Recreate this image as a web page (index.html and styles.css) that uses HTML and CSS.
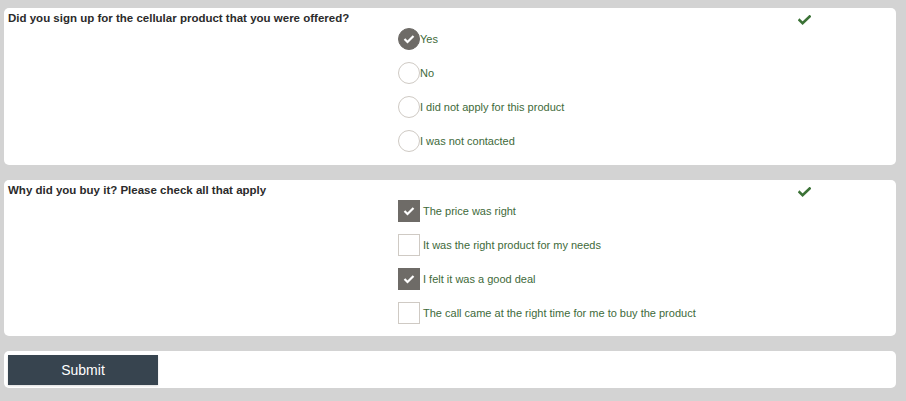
FILE: index.html
```html
<!DOCTYPE html>
<html>
<head>
<meta charset="utf-8">
<link rel="stylesheet" href="styles.css">
</head>
<body>
<div class="page">
  <section class="card">
    <div class="title">Did you sign up for the cellular product that you were offered?</div>
    <div class="done"><svg width="13" height="10" viewBox="0 0 13 10"><path d="M1.5 5.2 L4.6 8.2 L11.6 1.5" fill="none" stroke="#3b7236" stroke-width="2.6" stroke-linecap="square"/></svg></div>
    <ul class="options">
      <li class="opt"><span class="radio checked"><svg width="12" height="10" viewBox="0 0 12 10"><path d="M1.5 5 L4.5 8 L10.5 2" fill="none" stroke="#fff" stroke-width="2.2"/></svg></span><span class="label">Yes</span></li>
      <li class="opt"><span class="radio"></span><span class="label">No</span></li>
      <li class="opt"><span class="radio"></span><span class="label">I did not apply for this product</span></li>
      <li class="opt"><span class="radio"></span><span class="label">I was not contacted</span></li>
    </ul>
  </section>
  <section class="card second">
    <div class="title">Why did you buy it? Please check all that apply</div>
    <div class="done"><svg width="13" height="10" viewBox="0 0 13 10"><path d="M1.5 5.2 L4.6 8.2 L11.6 1.5" fill="none" stroke="#3b7236" stroke-width="2.6" stroke-linecap="square"/></svg></div>
    <ul class="options">
      <li class="opt"><span class="box checked"><svg width="12" height="10" viewBox="0 0 12 10"><path d="M1.5 5 L4.5 8 L10.5 2" fill="none" stroke="#fff" stroke-width="2.2"/></svg></span><span class="label wide">The price was right</span></li>
      <li class="opt"><span class="box"></span><span class="label wide">It was the right product for my needs</span></li>
      <li class="opt"><span class="box checked"><svg width="12" height="10" viewBox="0 0 12 10"><path d="M1.5 5 L4.5 8 L10.5 2" fill="none" stroke="#fff" stroke-width="2.2"/></svg></span><span class="label wide">I felt it was a good deal</span></li>
      <li class="opt"><span class="box"></span><span class="label wide">The call came at the right time for me to buy the product</span></li>
    </ul>
  </section>
  <section class="card actions">
    <button class="submit" type="button">Submit</button>
  </section>
</div>
</body>
</html>
```
FILE: styles.css
```css
html, body {
  margin: 0;
  padding: 0;
  background: #d3d3d3;
}
body {
  font-family: "Liberation Sans", Arial, sans-serif;
}
.page {
  padding: 8px 10px 0 4px;
  display: flex;
  flex-direction: column;
  gap: 15px;
}
.card {
  background: #fff;
  border-radius: 5px;
  padding: 4px 4px 13px 4px;
  display: grid;
  grid-template-columns: 390px 400px 1fr;
  row-gap: 3px;
}
.card.second {
  padding-bottom: 12px;
}
.title {
  grid-column: 1 / 3;
  grid-row: 1;
  font-size: 11.5px;
  font-weight: bold;
  line-height: 13px;
  color: #2b2b2b;
}
.done {
  grid-column: 3;
  grid-row: 1;
  padding-top: 3px;
  line-height: 0;
}
.options {
  grid-column: 2;
  grid-row: 2;
  list-style: none;
  margin: 0;
  padding: 0;
  display: flex;
  flex-direction: column;
  gap: 12px;
}
.opt {
  display: flex;
  align-items: center;
  height: 22px;
}
.radio {
  width: 22px;
  height: 22px;
  box-sizing: border-box;
  border: 1px solid #cfcac4;
  border-radius: 50%;
  display: flex;
  align-items: center;
  justify-content: center;
  flex: none;
}
.box {
  width: 22px;
  height: 22px;
  box-sizing: border-box;
  border: 1px solid #cfcac4;
  display: flex;
  align-items: center;
  justify-content: center;
  flex: none;
}
.radio.checked, .box.checked {
  background: #6e6b67;
  border-color: #6e6b67;
}
.label {
  font-size: 11px;
  color: #3e6a3a;
  line-height: 13px;
}
.label.wide {
  margin-left: 3px;
}
.actions {
  display: flex;
  padding: 4px 4px 3px 4px;
}
.submit {
  width: 150px;
  height: 30px;
  background: #37444f;
  color: #fff;
  border: none;
  font-family: "Liberation Sans", Arial, sans-serif;
  font-size: 14px;
  box-shadow: 0 1px 2px rgba(0,0,0,0.15);
  padding: 0;
}
```
